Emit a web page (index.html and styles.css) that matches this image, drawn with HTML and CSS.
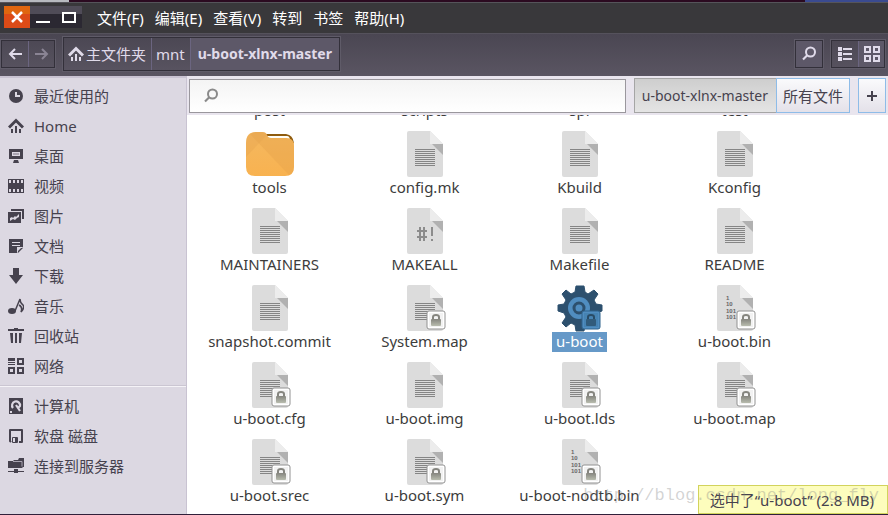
FILE: index.html
```html
<!DOCTYPE html>
<html lang="zh-CN">
<head>
<meta charset="utf-8">
<title>u-boot-xlnx-master</title>
<link rel="stylesheet" href="styles.css">
</head>
<body>
<svg class="defs" aria-hidden="true">
  <defs>
    <linearGradient id="folder-fill" x1="0" y1="0" x2="0" y2="1"><stop offset="0" stop-color="#f4b860"/><stop offset="1" stop-color="#f8b250"/></linearGradient>
    <linearGradient id="lock-fill" x1="0" y1="0" x2="0" y2="1"><stop offset="0" stop-color="#85857f"/><stop offset="1" stop-color="#b8bcae"/></linearGradient>
  </defs>
  <symbol id="home" viewBox="0 0 16 16"><path d="M1 9.500 8 2.500l7 7" fill="none" stroke="currentColor" stroke-width="3"/><path d="M3 11h2v4H3zM7 8h2v7H7zM11 11h2v4h-2z" fill="currentColor"/></symbol>
  <symbol id="find" viewBox="0 0 16 16"><circle cx="9.500" cy="6" r="4.500" fill="none" stroke="currentColor" stroke-width="2"/><path d="M6.500 9 2 13.500" stroke="currentColor" stroke-width="2.200"/></symbol>
  <symbol id="page" viewBox="0 0 48 48"><path d="M8 1h21l13 13v31a2 2 0 0 1-2 2H8a2 2 0 0 1-2-2V3a2 2 0 0 1 2-2z" fill="#dcdcdc"/><path d="M29 1 42 14H29z" fill="#ececec"/><path d="M31 14h11v11z" fill="#b1b1b1"/></symbol>
  <symbol id="text" viewBox="0 0 48 48"><use href="#page"/><path d="M14 19.500h20M14 21.500h20M14 23.500h20M14 25.500h20M14 27.500h20M14 29.500h20M14 31.500h20M14 33.500h20M14 35.500h20" stroke="#858585"/></symbol>
  <symbol id="script" viewBox="0 0 48 48"><use href="#page"/><path d="M19 20v14M23 20v14M16 24h10M16 30h10M31 20v9M31 32v2" stroke="#8c8c8c" stroke-width="2"/></symbol>
  <symbol id="binary" viewBox="0 0 48 48"><use href="#page"/><g fill="#666" font-family="Liberation Sans, sans-serif" font-size="6" font-weight="bold"><text x="15" y="16">1</text><text x="15" y="22">10</text><text x="15" y="29">101</text><text x="15" y="35">101</text></g></symbol>
  <symbol id="folder" viewBox="0 0 48 48"><path d="M20 4h20q7 1 8 9l-9 3H20z" fill="#8f5b0d"/><path d="M21 6h20q3 0 3 5v4H21z" fill="#fffdf5"/><path d="M10 2h6q4 0 5 3 1 3 4 3h15q8 0 8 8v21q0 9-9 9H9q-9 0-9-9V13Q0 2 10 2z" fill="url(#folder-fill)"/><path d="M4 4 43 45q5-2 5-8V16q0-8-8-8H25q-3 0-4-3-1-3-5-3h-6Q7 2 4 4z" fill="#e6a34b" opacity=".4"/><path d="M4 4q3-2 6-2h6q4 0 5 3L0 27V13q0-6 4-9z" fill="#e0a04b" opacity=".3"/></symbol>
  <symbol id="gear" viewBox="0 0 48 48"><path d="M20 2h8l1 6 3 2 6-4 4 4-4 6 2 4 6 1v6l-6 2-2 4 4 6-4 4-6-4-3 2-1 6h-8l-1-6-4-2-5 4-4-4 4-6-2-4-6-2v-6l6-1 2-4-4-6 4-4 5 4 4-2z" fill="#2d506e" stroke="#2d506e" stroke-linejoin="round"/><circle cx="23" cy="24" r="11" fill="#508dc0"/><circle cx="23" cy="24" r="5" fill="#508dc0" stroke="#2d506e" stroke-width="3"/></symbol>
  <symbol id="lock" viewBox="0 0 20 20"><rect x="1" y="1" width="18" height="18" rx="2" fill="#fff" stroke="#929292"/><rect x="3" y="3" width="14" height="14" fill="#f2f2f2"/><path d="M7 10V7q0-2 3-2t3 2v3" fill="none" stroke="#85857f" stroke-width="2"/><rect x="5" y="9" width="10" height="7" rx="1" fill="url(#lock-fill)"/></symbol>
  <symbol id="lock-selected" viewBox="0 0 20 20"><rect x="1" y="1" width="18" height="18" rx="2" fill="#508dc0" stroke="#2f638c"/><rect x="3" y="3" width="14" height="14" fill="#4683b3"/><path d="M7 10V7q0-2 3-2t3 2v3" fill="none" stroke="#294b66" stroke-width="2"/><rect x="5" y="9" width="10" height="7" rx="1" fill="#315b7b"/></symbol>
</svg>

<div class="desktop-edge"></div>
<header class="menubar">
  <div class="window-buttons">
    <button class="close" aria-label="关闭"><svg viewBox="0 0 26 22"><path d="m8 6 10 10M18 6 8 16" stroke="#fff" stroke-width="2.500"/></svg></button>
    <button aria-label="最小化"><svg viewBox="0 0 26 22"><path d="M6 16h14" stroke="#fff" stroke-width="2"/></svg></button>
    <button aria-label="最大化"><svg viewBox="0 0 26 22"><path d="M7 7h12v9H7z" fill="none" stroke="#fff" stroke-width="2"/></svg></button>
  </div>
  <nav class="menus">
    <button>文件(F)</button><button>编辑(E)</button><button>查看(V)</button><button>转到</button><button>书签</button><button>帮助(H)</button>
  </nav>
</header>

<div class="toolbar">
  <div class="group small">
    <button aria-label="后退"><svg class="i" viewBox="0 0 16 16"><path d="M15 8H3M8 3 3 8l5 5" fill="none" stroke="currentColor" stroke-width="2"/></svg></button>
    <button class="dim" aria-label="前进"><svg class="i" viewBox="0 0 16 16"><path d="M1 8h12M8 3l5 5-5 5" fill="none" stroke="currentColor" stroke-width="2"/></svg></button>
  </div>
  <div class="group path">
    <button><svg class="i"><use href="#home"/></svg>主文件夹</button>
    <button>mnt</button>
    <button class="on">u-boot-xlnx-master</button>
  </div>
  <div class="group small push"><button class="on" aria-label="搜索"><svg class="i"><use href="#find"/></svg></button></div>
  <div class="group small">
    <button aria-label="列表视图"><svg class="i" viewBox="0 0 16 16"><path d="M1 1h4v4H1zM1 6h4v4H1zM1 11h4v4H1zM6 2h9v2H6zM6 7h9v2H6zM6 12h9v2H6z" fill="currentColor"/></svg></button>
    <button class="on" aria-label="图标视图"><svg class="i" viewBox="0 0 16 16"><path d="M1 1h5v5H1zM10 1h5v5h-5zM1 10h5v5H1zM10 10h5v5h-5z" fill="none" stroke="currentColor" stroke-width="2"/></svg></button>
  </div>
</div>

<div class="body">
  <aside class="sidebar">
    <nav>
      <a href="#"><svg class="i" viewBox="0 0 16 16"><circle cx="8" cy="8" r="7" fill="currentColor"/><path d="M8 4v4h4" fill="none" stroke="#dcd8e2" stroke-width="2"/></svg>最近使用的</a>
      <a href="#"><svg class="i"><use href="#home"/></svg>Home</a>
      <a href="#"><svg class="i" viewBox="0 0 16 16"><path d="M1 1h14v10H1zM6 12h4l1 3H5z" fill="currentColor"/><path d="M4 4h8v4H4z" fill="#dcd8e2"/><path d="M5 5h6v2H5z" fill="#aaa5b2"/></svg>桌面</a>
      <a href="#"><svg class="i" viewBox="0 0 16 16"><path d="M0 1h16v14H0z" fill="currentColor"/><path d="M1 3.500h14M1 12.500h14" stroke="#dcd8e2" stroke-width="3" stroke-dasharray="2 2"/></svg>视频</a>
      <a href="#"><svg class="i" viewBox="0 0 16 16"><path d="M3 1h13v10h-2V3H3zM0 4h13v11H0z" fill="currentColor"/><path d="M2 13v-3l2-1 1 1 2-2 1 1 3-3v3l-2 1-2 2-2-1z" fill="#dcd8e2"/></svg>图片</a>
      <a href="#"><svg class="i" viewBox="0 0 16 16"><path d="M1 1h14v8l-6 6H1z" fill="currentColor"/><path d="M4 4.500h8M4 7.500h8" stroke="#dcd8e2"/><path d="M9 15V9h6z" fill="#dcd8e2"/><path d="M10 15v-2l3-3h2z" fill="currentColor"/></svg>文档</a>
      <a href="#"><svg class="i" viewBox="0 0 16 16"><path d="M5 0h6v7h4l-7 9-7-9h4z" fill="currentColor"/></svg>下载</a>
      <a href="#"><svg class="i" viewBox="0 0 16 16"><ellipse cx="4" cy="13" rx="4" ry="3" fill="currentColor"/><path d="m7 13 5-12q0 4 3 6 2 3-2 7 2-5-2-7" fill="none" stroke="currentColor" stroke-width="1.500"/></svg>音乐</a>
      <a href="#"><svg class="i" viewBox="0 0 16 16"><path d="M0 1h6V0h4v1h6v2H0zM2 5h3v10H3zM7 5h2v10H7zM11 5h3l-1 10h-2z" fill="currentColor"/></svg>回收站</a>
      <a href="#"><svg class="i" viewBox="0 0 16 16"><path d="M0 0h7v3H0zM0 4h7v1H0zM0 6h7v1H0z" fill="currentColor"/><path d="M10 1h5v5h-5zM1 10h5v5H1zM10 10h5v5h-5z" fill="none" stroke="currentColor" stroke-width="2"/></svg>网络</a>
    </nav>
    <hr>
    <nav>
      <a href="#"><svg class="i" viewBox="0 0 16 16"><path d="M1 0h14v16H1z" fill="currentColor"/><path d="M5 10a4 4 0 1 1 7-2l-2 2M8 7l4 6" fill="none" stroke="#dcd8e2" stroke-width="2.200"/><path d="M2 13h2v2H2z" fill="#dcd8e2"/></svg>计算机</a>
      <a href="#"><svg class="i" viewBox="0 0 16 16"><path d="M3 14 2 13V2h12v12h-3" fill="none" stroke="currentColor" stroke-width="2" stroke-linejoin="round"/><path d="M4.500 9.500h5v5h-5z" fill="none" stroke="currentColor"/><path d="M7 9h2v5H7z" fill="currentColor"/></svg>软盘 磁盘</a>
      <a href="#"><svg class="i" viewBox="0 0 16 16"><path d="M0 3h5l1-1h4l1-2h5v9h-1l-1 1H0zM0 13h6v-2h4v2h6v1h-6v1H6v-1H0z" fill="currentColor"/><path d="M5 3.500h9v5" fill="none" stroke="#aaa5b2"/></svg>连接到服务器</a>
    </nav>
  </aside>

  <main>
    <form class="searchbar">
      <label class="search"><svg class="i"><use href="#find"/></svg><input type="text" aria-label="搜索"></label>
      <div class="scope"><button type="button" class="pressed">u-boot-xlnx-master</button><button type="button">所有文件</button></div>
      <button type="button" class="add" aria-label="添加"><svg viewBox="0 0 10 10"><path d="M5 0v10M0 5h10" stroke="#46424e" stroke-width="2"/></svg></button>
    </form>
    <div class="files">
      <button><svg class="f"><use href="#folder"/></svg><span>post</span></button>
      <button><svg class="f"><use href="#folder"/></svg><span>scripts</span></button>
      <button><svg class="f"><use href="#folder"/></svg><span>spl</span></button>
      <button><svg class="f"><use href="#folder"/></svg><span>test</span></button>

      <button><svg class="f"><use href="#folder"/></svg><span>tools</span></button>
      <button><svg class="f"><use href="#text"/></svg><span>config.mk</span></button>
      <button><svg class="f"><use href="#text"/></svg><span>Kbuild</span></button>
      <button><svg class="f"><use href="#text"/></svg><span>Kconfig</span></button>

      <button><svg class="f"><use href="#text"/></svg><span>MAINTAINERS</span></button>
      <button><svg class="f"><use href="#script"/></svg><span>MAKEALL</span></button>
      <button><svg class="f"><use href="#text"/></svg><span>Makefile</span></button>
      <button><svg class="f"><use href="#text"/></svg><span>README</span></button>

      <button><svg class="f"><use href="#text"/></svg><span>snapshot.commit</span></button>
      <button><svg class="f"><use href="#text"/></svg><svg class="lock"><use href="#lock"/></svg><span>System.map</span></button>
      <button class="selected"><svg class="f"><use href="#gear"/></svg><svg class="lock"><use href="#lock-selected"/></svg><span>u-boot</span></button>
      <button><svg class="f"><use href="#binary"/></svg><svg class="lock"><use href="#lock"/></svg><span>u-boot.bin</span></button>

      <button><svg class="f"><use href="#text"/></svg><svg class="lock"><use href="#lock"/></svg><span>u-boot.cfg</span></button>
      <button><svg class="f"><use href="#text"/></svg><span>u-boot.img</span></button>
      <button><svg class="f"><use href="#text"/></svg><svg class="lock"><use href="#lock"/></svg><span>u-boot.lds</span></button>
      <button><svg class="f"><use href="#text"/></svg><svg class="lock"><use href="#lock"/></svg><span>u-boot.map</span></button>

      <button><svg class="f"><use href="#text"/></svg><svg class="lock"><use href="#lock"/></svg><span>u-boot.srec</span></button>
      <button><svg class="f"><use href="#text"/></svg><svg class="lock"><use href="#lock"/></svg><span>u-boot.sym</span></button>
      <button><svg class="f"><use href="#binary"/></svg><svg class="lock"><use href="#lock"/></svg><span>u-boot-nodtb.bin</span></button>
    </div>
    <div class="status">选中了“u-boot” (2.8 MB)</div>
    <div class="watermark">http://blog.csdn.net/long_fly</div>
  </main>
</div>
</body>
</html>
```
FILE: styles.css
```css
* { box-sizing: border-box; }

body {
  margin: 0;
  height: 100vh;
  display: flex;
  flex-direction: column;
  overflow: hidden;
  border-bottom: 1px solid #30203a;
  font: 15px/20px "Noto Sans", "Noto Sans CJK SC", sans-serif;
  color: #46424e;
}

button {
  margin: 0;
  padding: 0;
  border: 0;
  background: none;
  font: inherit;
  color: inherit;
}

.defs { position: absolute; width: 0; height: 0; }
.i { width: 16px; height: 16px; flex: none; }

.desktop-edge {
  flex: none;
  height: 2px;
  background: linear-gradient(90deg, #b8bac0 69px, #2b0a20 69px calc(100% - 83px), #3a4a90 calc(100% - 83px));
}

.menubar {
  flex: none;
  height: 32px;
  display: flex;
  align-items: center;
  gap: 15px;
  padding: 0 4px;
  border-top: 1px solid #55545a;
  border-bottom: 1px solid #55525c;
  background: #39383b;
  color: #fff;
}
.window-buttons {
  display: flex;
  height: 22px;
  margin-bottom: 2px;
  background: linear-gradient(#504c58 35%, #2b2832 35%);
}
.window-buttons button { width: 26px; height: 22px; }
.window-buttons svg { display: block; }
.window-buttons .close { background: linear-gradient(#e0660f 35%, #dc4b17 35%); }
.menus { display: flex; gap: 11px; }

.toolbar {
  flex: none;
  height: 42px;
  display: flex;
  align-items: center;
  gap: 8px;
  padding: 0 3px 2px 1px;
  background: linear-gradient(#4a4652, #5a5562);
  color: #e0dbea;
}
.group {
  display: flex;
  border: 1px solid #33303a;
  outline: 1px solid #5f5b68;
}
.small { height: 28px; }
.small button { width: 26px; display: grid; place-items: center; }
.path { height: 34px; }
.path button {
  display: flex;
  align-items: center;
  gap: 2px;
  padding: 0 5px 0 4px;
}
.group button + button { border-left: 1px solid #6b6580; }
.group .on { background: #5d5868; }
.path .on { padding: 0 7px; font-weight: bold; font-size: 14px; }
.dim { color: #8a8494; }
.push { margin-left: auto; }

.body { flex: 1; min-height: 0; display: flex; }

.sidebar {
  width: 187px;
  flex: none;
  padding-top: 3px;
  border-top: 2px solid #c9c3d2;
  border-right: 1px solid #c9c3d2;
  background: #dcd8e2;
}
.sidebar a {
  display: flex;
  align-items: center;
  gap: 10px;
  height: 30px;
  padding-left: 8px;
  color: inherit;
  text-decoration: none;
}
.sidebar hr {
  height: 2px;
  margin: 4px 0;
  border: 0;
  border-top: 1px solid #cbc6d2;
  border-bottom: 1px solid #f5f3f7;
}

main {
  position: relative;
  flex: 1;
  min-width: 0;
  display: flex;
  flex-direction: column;
  background: #fff;
}
.searchbar {
  flex: none;
  display: flex;
  align-items: center;
  gap: 8px;
  height: 39px;
  padding: 0 2px;
  background: #e9e5ee;
}
.search {
  flex: 1;
  display: flex;
  align-items: center;
  height: 34px;
  padding-left: 13px;
  border: 1px solid #9a979d;
  background: linear-gradient(#f4f4f4, #fff);
  color: #8a8a8a;
}
.search input {
  flex: 1;
  min-width: 0;
  border: 0;
  outline: 0;
  background: none;
  font: inherit;
}
.scope { display: flex; height: 35px; }
.scope button, .add {
  padding: 0 6px;
  border: 1px solid #8ebce8;
  background: linear-gradient(#fafafc, #e4e1e9);
}
.scope .pressed {
  padding: 0 8px 0 7px;
  border-color: #a5a5a5;
  border-right: 0;
  background: linear-gradient(#cecece, #e4e4e4);
  font-size: 14px;
}
.add { width: 28px; height: 35px; display: grid; place-items: center; }
.add svg { width: 10px; height: 10px; }

.files {
  flex: 1;
  min-height: 0;
  display: grid;
  grid-template-columns: repeat(auto-fill, 155px);
  grid-auto-rows: 68px;
  row-gap: 9px;
  align-content: end;
  padding: 0 5px 8px;
  overflow: hidden;
  color: #3c3c3c;
}
.files button {
  position: relative;
  display: flex;
  flex-direction: column;
  align-items: center;
}
.f { width: 48px; height: 48px; flex: none; }
.lock { position: absolute; left: 79px; top: 26px; width: 20px; height: 20px; }
.files span { padding: 0 4px 2px; line-height: 18px; white-space: nowrap; }
.selected span { background: #6699c8; color: #fff; }

.status {
  position: absolute;
  right: 0;
  bottom: 0;
  height: 29px;
  padding: 4px 13px 3px 11px;
  border: 1px solid #d2d35c;
  background: #fdfdbd;
}
.watermark {
  position: absolute;
  right: 9px;
  bottom: 8px;
  font: 17px/20px "Liberation Mono", monospace;
  color: rgba(130, 130, 130, 0.35);
  pointer-events: none;
}
```
